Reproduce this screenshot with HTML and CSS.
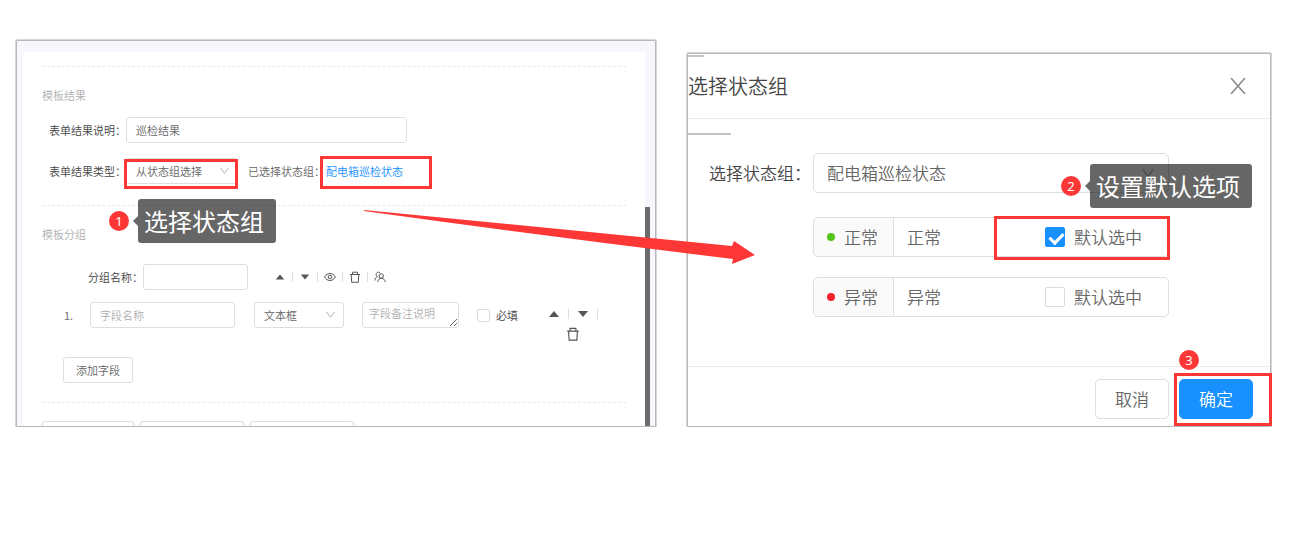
FILE: index.html
```html
<!DOCTYPE html>
<html lang="zh-CN">
<head>
    <meta charset="UTF-8">
    <meta name="viewport" content="width=device-width, initial-scale=1.0">
    <title>选择状态组</title>
    <link rel="stylesheet" href="styles.css">
</head>
<body>
    <svg class="symbols" aria-hidden="true">
        <symbol id="down" viewBox="0 0 12 12"><path d="M1.5 3l4.500 6 4.500-6" fill="none" stroke="currentColor"/></symbol>
        <symbol id="caretUp" viewBox="0 0 12 12"><path d="M6 3l5 6H1z" fill="currentColor"/></symbol>
        <symbol id="caretDown" viewBox="0 0 12 12"><path d="M6 9L1 3h10z" fill="currentColor"/></symbol>
        <symbol id="eye" viewBox="0 0 12 12"><path d="M.6 6C3 1.300 9 1.300 11.400 6 9 10.700 3 10.700.6 6z" fill="none" stroke="currentColor"/><circle cx="6" cy="6" r="1.800" fill="none" stroke="currentColor"/></symbol>
        <symbol id="trash" viewBox="0 0 12 12"><path d="M1 3.500h10M3.500 3.300V1.200h5v2.100M2.200 3.500l.5 7.800h6.600l.5-7.800" fill="none" stroke="currentColor"/></symbol>
        <symbol id="team" viewBox="0 0 12 12"><path d="M.8 9.500C1 7.500 2 6.300 3.500 5.700 1.200 4.300 2 1.200 4.300 1.200c1 0 1.700.4 2.100 1M3.800 11c.2-2.300 1.500-3.700 3.500-3.700s3.800 1.400 4 3.700" fill="none" stroke="currentColor"/><circle cx="7.200" cy="5" r="2.200" fill="none" stroke="currentColor"/></symbol>
    </svg>

    <main class="stage">
        <section class="panel template">
            <div class="card">
                <hr>
                <h2>模板结果</h2>
                <div class="row result">
                    <label for="resultDesc">表单结果说明：</label>
                    <input type="text" id="resultDesc" class="control desc" value="巡检结果">
                </div>
                <div class="row result">
                    <label for="resultType">表单结果类型：</label>
                    <div class="selectBox type">
                        <select id="resultType" class="control"><option>从状态组选择</option></select>
                        <svg class="arrow"><use href="#down"/></svg>
                        <span class="mark markType"></span>
                        <div class="step stepOne"><b>1</b><span class="tip">选择状态组</span></div>
                    </div>
                    <span class="picked">已选择状态组：</span>
                    <a href="#dialog" class="pickedLink">配电箱巡检状态<span class="mark markLink"></span></a>
                </div>
                <hr>
                <h2>模板分组</h2>
                <div class="row group">
                    <label for="groupName">分组名称：</label>
                    <input type="text" id="groupName" class="control groupName">
                    <div class="tools">
                        <button type="button" aria-label="上移"><svg class="small"><use href="#caretUp"/></svg></button><i></i>
                        <button type="button" aria-label="下移"><svg class="small"><use href="#caretDown"/></svg></button><i></i>
                        <button type="button" aria-label="预览"><svg><use href="#eye"/></svg></button><i></i>
                        <button type="button" aria-label="删除"><svg><use href="#trash"/></svg></button><i></i>
                        <button type="button" aria-label="人员"><svg><use href="#team"/></svg></button>
                    </div>
                </div>
                <div class="row field">
                    <span class="number">1.</span>
                    <input type="text" class="control fieldName" placeholder="字段名称" aria-label="字段名称">
                    <div class="selectBox kind">
                        <select class="control" aria-label="字段类型"><option>文本框</option></select>
                        <svg class="arrow"><use href="#down"/></svg>
                    </div>
                    <textarea class="control" placeholder="字段备注说明" aria-label="字段备注说明"></textarea>
                    <label class="check"><input type="checkbox">必填</label>
                    <div class="tools wrap">
                        <button type="button" aria-label="上移"><svg><use href="#caretUp"/></svg></button><i></i>
                        <button type="button" aria-label="下移"><svg><use href="#caretDown"/></svg></button><i></i>
                        <button type="button" aria-label="删除"><svg class="big"><use href="#trash"/></svg></button>
                    </div>
                </div>
                <button type="button" class="btn add">添加字段</button>
                <hr>
                <div class="cut"><span></span><span></span><span></span></div>
            </div>
            <div class="scroll"></div>
        </section>

        <section class="panel dialog" id="dialog">
            <header>
                <h1>选择状态组</h1>
                <button type="button" class="close" aria-label="关闭">
                    <svg viewBox="0 0 16 16"><path d="M1 0l14 16M15 0L1 16" fill="none" stroke="currentColor" stroke-width="1.500"/></svg>
                </button>
            </header>
            <div class="content">
                <label for="group">选择状态组：</label>
                <div class="selectBox">
                    <select id="group" class="control"><option>配电箱巡检状态</option></select>
                    <svg class="arrow"><use href="#down"/></svg>
                    <div class="step stepTwo"><b>2</b><span class="tip">设置默认选项</span></div>
                </div>
                <div class="state">
                    <label class="tag" for="normal"><em class="dot green"></em>正常</label>
                    <input type="text" id="normal" value="正常">
                    <label class="check"><input type="checkbox" checked>默认选中</label>
                    <span class="mark markCheck"></span>
                </div>
                <div class="state">
                    <label class="tag" for="abnormal"><em class="dot red"></em>异常</label>
                    <input type="text" id="abnormal" value="异常">
                    <label class="check"><input type="checkbox">默认选中</label>
                </div>
            </div>
            <footer>
                <button type="button" class="btn">取消</button>
                <div class="okBox">
                    <button type="button" class="btn primary">确定</button>
                    <span class="mark markOk"></span>
                    <div class="step stepThree"><b>3</b></div>
                </div>
            </footer>
        </section>

        <svg class="pointer" viewBox="0 0 392 54" preserveAspectRatio="none" aria-hidden="true">
            <path d="M0 0L368 36 370 31 391 45 368 54 369 49Q180 26 0 1z" fill="#fd3736"/>
        </svg>
    </main>
</body>
</html>
```

FILE: styles.css
```css
* {
    box-sizing: border-box;
}
body {
    margin: 0;
    background: #fff;
    color: #666;
    font-family: "Noto Sans CJK SC", sans-serif;
    font-weight: 350;
    font-size: 11px;
    line-height: 16px;
}
input, select, textarea, button {
    font: inherit;
    color: inherit;
    margin: 0;
}
h1, h2 {
    margin: 0;
    font-weight: 350;
}
.symbols {
    position: absolute;
    width: 0;
    height: 0;
}
.stage {
    position: relative;
    display: grid;
    grid-template-columns: 640fr 584fr;
    gap: 31px;
    align-items: end;
    padding: 40px 21px 0 16px;
}
.panel {
    position: relative;
    min-width: 0;
    border: 1px solid #b8b8b8;
    border-radius: 1px;
    box-shadow: 0 0 0 1px #d8d8d8;
}

/* form on the left */
.template {
    padding: 11px 10px 0 6px;
    background: #f5f7fc;
}
.card {
    padding: 14px 19px 0;
    background: #fff;
}
hr {
    margin: 0;
    border: 0;
    border-top: 1px dashed #e8e8e8;
}
h2 {
    margin: 20px 0 14px;
    color: #b0b0b0;
    font-size: 11px;
}
.row {
    display: flex;
    align-items: center;
}
.control {
    width: 100%;
    height: 26px;
    padding: 0 9px;
    border: 1px solid #dedede;
    border-radius: 3px;
    background: #fff;
    outline: none;
    appearance: none;
}
.control::placeholder {
    color: #b0b0b0;
    opacity: 1;
}
.row label {
    color: #444;
}
.result {
    margin-bottom: 15px;
    padding-left: 7px;
}
.result label {
    flex: 0 0 77px;
}
.result + hr {
    margin-top: 21px;
}
.desc {
    flex: 0 1 281px;
}
.selectBox {
    position: relative;
}
.arrow {
    position: absolute;
    top: 7px;
    right: 8px;
    width: 11px;
    height: 11px;
    color: #aaa;
    pointer-events: none;
}
.type {
    flex: 0 0 112px;
}
.picked {
    flex: 0 0 78px;
    margin-left: 10px;
}
.pickedLink {
    position: relative;
    color: #1890ff;
    text-decoration: none;
}
.group {
    margin-top: 22px;
    padding-left: 46px;
}
.group label {
    flex: 0 0 55px;
}
.groupName {
    flex: 0 1 105px;
}
.tools {
    display: flex;
    align-items: center;
    gap: 6px;
    margin-left: 26px;
}
.tools button {
    display: flex;
    justify-content: center;
    align-items: center;
    width: 12px;
    height: 12px;
    padding: 0;
    border: 0;
    background: none;
    color: #555;
}
.tools svg {
    flex: none;
    width: 12px;
    height: 12px;
}
.tools .small {
    width: 10px;
    height: 10px;
}
.tools .big {
    width: 14px;
    height: 14px;
}
.tools i {
    width: 1px;
    height: 10px;
    background: #ddd;
}
.field {
    align-items: flex-start;
    margin-top: 12px;
    padding-left: 22px;
}
.number {
    flex: 0 0 26px;
    line-height: 26px;
}
.fieldName {
    flex: 0 1 145px;
}
.kind {
    flex: 0 0 90px;
    margin: 0 18px 0 19px;
}
textarea.control {
    flex: 0 0 97px;
    padding: 2px 6px;
    overflow: hidden;
}
.check {
    display: flex;
    align-items: center;
}
.check input {
    flex: none;
    width: 13px;
    height: 13px;
    margin-right: 6px;
    border: 1px solid #dcdcdc;
    border-radius: 2px;
    background: #fff;
    appearance: none;
}
.field .check {
    height: 26px;
    margin-left: 18px;
}
.wrap {
    flex: 0 0 50px;
    flex-wrap: wrap;
    justify-content: center;
    gap: 8px;
    margin-left: 30px;
    padding-top: 6px;
}
.btn {
    height: 26px;
    padding: 0 12px;
    border: 1px solid #dedede;
    border-radius: 3px;
    background: #fff;
}
.add {
    display: block;
    margin: 17px 0 19px 21px;
}
.cut {
    display: flex;
    gap: 6px;
    margin-top: 18px;
}
.cut span {
    flex: 0 0 104px;
    height: 5px;
    border: 1px solid #dedede;
    border-bottom: 0;
    border-radius: 3px 3px 0 0;
}
.cut span:first-child {
    flex-basis: 92px;
}
.scroll {
    position: absolute;
    right: 5px;
    bottom: 0;
    width: 5px;
    height: 219px;
    background: #6b6b6b;
}

/* dialog on the right */
.dialog {
    font-size: 17px;
    line-height: 24px;
}
.dialog::before, .dialog::after {
    content: "";
    position: absolute;
    left: 0;
    top: 1px;
    width: 16px;
    height: 2px;
    background: #c4c4c4;
}
.dialog::after {
    top: 79px;
    width: 43px;
}
header {
    display: flex;
    align-items: center;
    justify-content: space-between;
    height: 65px;
    padding-right: 24px;
    border-bottom: 1px solid #ececec;
}
h1 {
    color: #444;
    font-size: 20px;
}
.close {
    display: flex;
    padding: 0;
    border: 0;
    background: none;
    color: #888;
}
.close svg {
    width: 16px;
    height: 16px;
}
.content {
    display: grid;
    grid-template-columns: 104px minmax(0, 1fr);
    align-items: center;
    row-gap: 20px;
    padding: 34px 101px 49px 21px;
}
.content > label {
    margin-bottom: 4px;
    color: #444;
    white-space: nowrap;
}
.content .control {
    height: 40px;
    padding: 0 13px;
    border-radius: 5px;
}
.content .arrow {
    top: 13px;
    right: 14px;
    width: 14px;
    height: 14px;
}
.state {
    position: relative;
    grid-column: 2;
    display: flex;
    height: 40px;
    border: 1px solid #dedede;
    border-radius: 5px;
}
.content .selectBox {
    margin-bottom: 4px;
}
.tag {
    flex: 0 0 80px;
    display: flex;
    align-items: center;
    padding-left: 13px;
    border-right: 1px solid #dedede;
    border-radius: 5px 0 0 5px;
    background: #fafafa;
}
.dot {
    width: 8px;
    height: 8px;
    margin-right: 9px;
    border-radius: 50%;
}
.green {
    background: #52c41a;
}
.red {
    background: #f5222d;
}
.state input[type=text] {
    flex: 1;
    min-width: 0;
    padding: 0 13px;
    border: 0;
    background: none;
}
.state .check {
    padding-right: 26px;
}
.state .check input {
    width: 20px;
    height: 20px;
    margin-right: 9px;
}
.state .check input:checked {
    position: relative;
    border-color: #1890ff;
    background: #1890ff;
}
.state .check input:checked::after {
    content: "";
    position: absolute;
    left: 6px;
    top: 2px;
    width: 6px;
    height: 11px;
    border: solid #fff;
    border-width: 0 3px 3px 0;
    transform: rotate(45deg);
}
footer {
    display: flex;
    justify-content: flex-end;
    gap: 10px;
    padding: 12px 17px 7px 0;
    border-top: 1px solid #ececec;
}
footer .btn {
    width: 74px;
    height: 40px;
    border-radius: 5px;
}
footer .primary {
    border-color: #1890ff;
    background: #1890ff;
    color: #fff;
}
.okBox {
    position: relative;
}

/* red marks and numbered steps */
.mark {
    position: absolute;
    border: 3px solid #fd3736;
    pointer-events: none;
}
.markType {
    inset: 1px 0 -5px -2px;
}
.markLink {
    inset: -7px -29px -10px -6px;
}
.markCheck {
    inset: -2px -2px -4px auto;
    width: 176px;
}
.markOk {
    inset: -6px -19px -7px -5px;
}
.step {
    position: absolute;
    z-index: 2;
    display: flex;
    align-items: center;
    gap: 9px;
    white-space: nowrap;
}
.step b {
    width: 20px;
    height: 20px;
    border-radius: 50%;
    background: #fd3736;
    color: #fff;
    font: 13px/20px "Noto Sans", sans-serif;
    text-align: center;
}
.tip {
    position: relative;
    padding: 0 12px 0 6px;
    border-radius: 3px;
    background: rgba(0, 0, 0, .6);
    color: #fff;
    font-size: 24px;
    font-weight: 400;
    line-height: 44px;
}
.tip::before {
    content: "";
    position: absolute;
    left: -5px;
    top: 17px;
    border: 5px solid transparent;
    border-left: 0;
    border-right-color: rgba(0, 0, 0, .6);
}
.stepOne {
    left: -17px;
    top: 41px;
}
.stepTwo {
    right: -83px;
    top: 11px;
}
.stepThree {
    left: 0;
    top: -29px;
}
.pointer {
    position: absolute;
    left: 364px;
    top: 210px;
    width: 392px;
    height: 54px;
    pointer-events: none;
}
```
